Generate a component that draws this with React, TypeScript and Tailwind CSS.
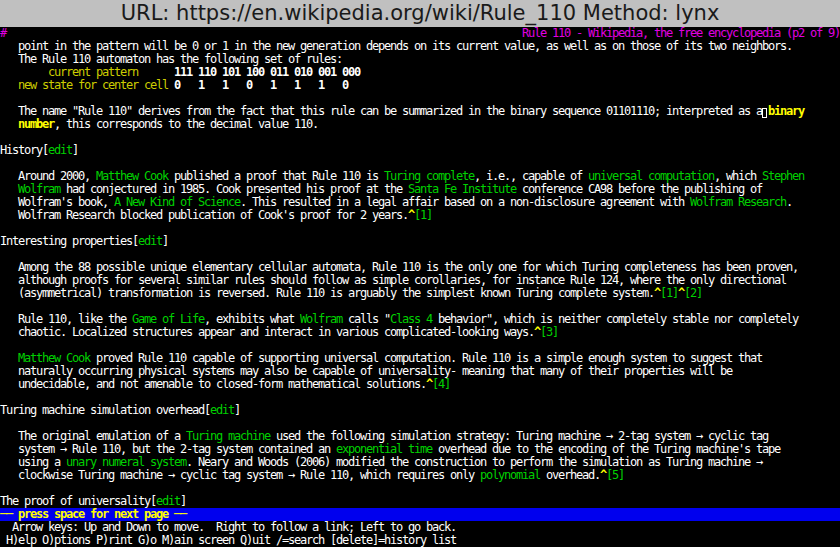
import React from 'react';

type Seg = [string, string?];

// lynx colour classes (xterm palette)
const STYLE: Record<string, string> = {
  n: 'text-white',
  g: 'text-[#00d000]',
  y: 'text-[#cdcd00]',
  Y: 'text-[#ffff00] font-bold',
  b: 'text-white font-bold',
  m: 'text-[#e000e0]',
};

const TITLE = 'Rule 110 - Wikipedia, the free encyclopedia (p2 of 9)';

const rows: (Seg[] | 'cursor')[] = [
  [['#', 'm'], [' '.repeat(140 - 1 - TITLE.length)], [TITLE, 'm']],
  [['   point in the pattern will be 0 or 1 in the new generation depends on its current value, as well as on those of its two neighbors.']],
  [['   The Rule 110 automaton has the following set of rules:']],
  [['        '], ['current pattern', 'y'], ['      '], ['111 110 101 100 011 010 001 000', 'b']],
  [['   '], ['new state for center cell', 'y'], [' '], ['0   1   1   0   1   1   1   0', 'b']],
  [],
  'cursor',
  [['   '], ['number', 'Y'], [', this corresponds to the decimal value 110.']],
  [],
  [['History['], ['edit', 'g'], [']']],
  [],
  [['   Around 2000, '], ['Matthew Cook', 'g'], [' published a proof that Rule 110 is '], ['Turing complete', 'g'], [', i.e., capable of '], ['universal computation', 'g'], [', which '], ['Stephen', 'g']],
  [['   '], ['Wolfram', 'g'], [' had conjectured in 1985. Cook presented his proof at the '], ['Santa Fe Institute', 'g'], [' conference CA98 before the publishing of']],
  [["   Wolfram's book, "], ['A New Kind of Science', 'g'], ['. This resulted in a legal affair based on a non-disclosure agreement with '], ['Wolfram Research', 'g'], ['.']],
  [["   Wolfram Research blocked publication of Cook's proof for 2 years."], ['^', 'Y'], ['[1]', 'g']],
  [],
  [['Interesting properties['], ['edit', 'g'], [']']],
  [],
  [['   Among the 88 possible unique elementary cellular automata, Rule 110 is the only one for which Turing completeness has been proven,']],
  [['   although proofs for several similar rules should follow as simple corollaries, for instance Rule 124, where the only directional']],
  [['   (asymmetrical) transformation is reversed. Rule 110 is arguably the simplest known Turing complete system.'], ['^', 'Y'], ['[1]', 'g'], ['^', 'Y'], ['[2]', 'g']],
  [],
  [['   Rule 110, like the '], ['Game of Life', 'g'], [', exhibits what '], ['Wolfram', 'g'], [' calls "'], ['Class 4', 'g'], [' behavior", which is neither completely stable nor completely']],
  [['   chaotic. Localized structures appear and interact in various complicated-looking ways.'], ['^', 'Y'], ['[3]', 'g']],
  [],
  [['   '], ['Matthew Cook', 'g'], [' proved Rule 110 capable of supporting universal computation. Rule 110 is a simple enough system to suggest that']],
  [['   naturally occurring physical systems may also be capable of universality- meaning that many of their properties will be']],
  [['   undecidable, and not amenable to closed-form mathematical solutions.'], ['^', 'Y'], ['[4]', 'g']],
  [],
  [['Turing machine simulation overhead['], ['edit', 'g'], [']']],
  [],
  [['   The original emulation of a '], ['Turing machine', 'g'], [' used the following simulation strategy: Turing machine \u2192 2-tag system \u2192 cyclic tag']],
  [['   system \u2192 Rule 110, but the 2-tag system contained an '], ['exponential time', 'g'], [" overhead due to the encoding of the Turing machine's tape"]],
  [['   using a '], ['unary numeral system', 'g'], ['. Neary and Woods (2006) modified the construction to perform the simulation as Turing machine \u2192']],
  [['   clockwise Turing machine \u2192 cyclic tag system \u2192 Rule 110, which requires only '], ['polynomial', 'g'], [' overhead.'], ['^', 'Y'], ['[5]', 'g']],
  [],
  [['The proof of universality['], ['edit', 'g'], [']']],
];

const Row: React.FC<{ segs: Seg[] }> = ({ segs }) => (
  <div className="h-[13px] leading-[13px] whitespace-pre">
    {segs.map(([t, s], i) => (
      <span key={i} className={STYLE[s ?? 'n']}>{t}</span>
    ))}
  </div>
);

const App: React.FC = () => {
  return (
    <div className="w-[840px] h-[547px] bg-black overflow-hidden flex flex-col">
      <div className="h-[27px] shrink-0 bg-[#c0c0c0] flex items-center justify-center font-['DejaVu_Sans',sans-serif] text-[21px] text-[#1a1a1a]">
        URL: https://en.wikipedia.org/wiki/Rule_110 Method: lynx
      </div>

      <div className="font-['DejaVu_Sans_Mono',monospace] text-[12px] tracking-[-1.2246px] text-white">
        {rows.map((r, i) =>
          r === 'cursor' ? (
            <div key={i} className="h-[13px] leading-[13px] whitespace-pre">
              <span>{'   The name "Rule 110" derives from the fact that this rule can be summarized in the binary sequence 01101110; interpreted as a'}</span>
              <span className="inline-block w-[6px] h-[13px] align-top">
                <span className="block mt-[3px] w-[5px] h-[10px] border border-white" />
              </span>
              <span className={STYLE.Y}>binary</span>
            </div>
          ) : (
            <Row key={i} segs={r} />
          )
        )}

        {/* status line */}
        <div className="h-[13px] leading-[13px] whitespace-pre bg-[#0000ee] text-[#ffff00] font-bold">
          {'\u2500\u2500 press space for next page \u2500\u2500'}
        </div>
        <div className="h-[13px] leading-[13px] whitespace-pre">
          {'  Arrow keys: Up and Down to move.  Right to follow a link; Left to go back.'}
        </div>
        <div className="h-[13px] leading-[13px] whitespace-pre">
          {' H)elp O)ptions P)rint G)o M)ain screen Q)uit /=search [delete]=history list'}
        </div>
      </div>
    </div>
  );
};

export default App;
